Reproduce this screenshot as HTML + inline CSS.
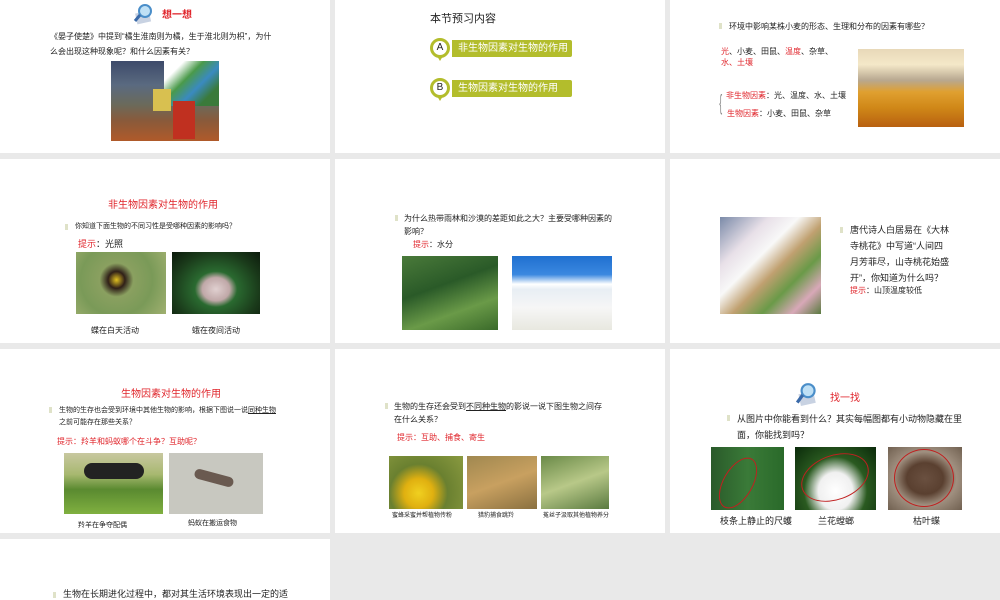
<!DOCTYPE html>
<html><head><meta charset="utf-8"><style>
*{margin:0;padding:0;box-sizing:border-box}
html{width:1000px;height:600px;overflow:hidden}
body{width:1000px;height:600px;overflow:hidden;background:#e9e9e9;position:relative;font-family:"Liberation Sans","Noto Sans CJK SC",sans-serif;color:#222}
.s{position:absolute;background:#fff;width:330px;height:184px;overflow:hidden}
.a{position:absolute;white-space:nowrap}
.r{color:#e0262c}
.t{font-size:8px;line-height:13px}
.m{font-size:9px;line-height:15px}
.b{position:absolute;width:3px;height:6px;background:#dfe2c8}
.img{position:absolute;overflow:hidden}
.pill{position:absolute;left:452px;width:120px;height:17px;background:#b3bd2c;color:#fff;font-size:10px;line-height:17px;padding-left:6px;border-radius:0 2px 2px 0}
.circ{position:absolute;width:20px;height:20px;border-radius:50%;background:#fff;border:3px solid #b3bd2c;font-size:10px;line-height:14px;text-align:center;color:#222}
.circ:after{content:"";position:absolute;left:4px;top:15px;border:3px solid transparent;border-top:5px solid #b3bd2c}
</style></head><body>

<!-- Slide 1 -->
<div class="s" style="left:0;top:-31px;height:184px"></div>
<svg class="img" style="left:133px;top:3px" width="22" height="22" viewBox="0 0 22 22"><rect x="3" y="9" width="14" height="11" fill="#c8d2e2" transform="rotate(-12 10 14)"/><circle cx="12" cy="8" r="6" fill="#bfe0f5" stroke="#4a8ec9" stroke-width="2"/><path d="M7 12 L2 18" stroke="#3a6aa9" stroke-width="3"/></svg>
<div class="a r" style="left:162px;top:6px;font-size:10px;font-weight:bold">想一想</div>
<div class="a t" style="left:50px;top:30px">《晏子使楚》中提到“橘生淮南则为橘，生于淮北则为枳”，为什</div>
<div class="a t" style="left:50px;top:45px">么会出现这种现象呢？和什么因素有关？</div>
<div class="img" style="left:111px;top:61px;width:108px;height:80px;background:linear-gradient(180deg,#3d4a6a 0%,#5a6a80 30%,#6b6a5a 55%,#8a5a3a 75%,#b05a2a 100%)"><div style="position:absolute;right:0;top:0;width:55px;height:45px;background:linear-gradient(135deg,#fff 20%,#4a9a4a 40%,#3a8ac0 60%,#3a7a3a 80%)"></div><div style="position:absolute;left:62px;top:40px;width:22px;height:38px;background:#c03020"></div><div style="position:absolute;left:42px;top:28px;width:18px;height:22px;background:#d8c050"></div></div>

<!-- Slide 2 -->
<div class="s" style="left:335px;top:-31px"></div>
<div class="a" style="left:430px;top:10px;font-size:11px">本节预习内容</div>
<div class="pill" style="top:40px">非生物因素对生物的作用</div>
<div class="circ" style="left:430px;top:38px">A</div>
<div class="pill" style="top:80px">生物因素对生物的作用</div>
<div class="circ" style="left:430px;top:78px">B</div>

<!-- Slide 3 -->
<div class="s" style="left:670px;top:-31px"></div>
<div class="b" style="left:719px;top:23px"></div>
<div class="a t" style="left:729px;top:20px">环境中影响某株小麦的形态、生理和分布的因素有哪些？</div>
<div class="a t" style="left:721px;top:45px"><span class="r">光</span>、小麦、田鼠、<span class="r">温度</span>、杂草、</div>
<div class="a t r" style="left:721px;top:56px">水、土壤</div>
<div class="a" style="left:717px;top:88px;font-size:22px;line-height:30px;color:#888;font-weight:100;transform:scaleX(.4)">{</div>
<div class="a t" style="left:726px;top:89px"><span class="r">非生物因素</span>：光、温度、水、土壤</div>
<div class="a t" style="left:727px;top:107px"><span class="r">生物因素</span>：小麦、田鼠、杂草</div>
<div class="img" style="left:858px;top:49px;width:106px;height:78px;background:linear-gradient(180deg,#e8d8b8 0%,#f4e8c8 20%,#b8a890 40%,#e0a030 55%,#d08818 75%,#b86010 100%)"></div>

<!-- Slide 4 -->
<div class="s" style="left:0;top:159px"></div>
<div class="a r" style="left:108px;top:196px;font-size:10px">非生物因素对生物的作用</div>
<div class="b" style="left:65px;top:224px"></div>
<div class="a t" style="left:75px;top:220px;font-size:7px">你知道下面生物的不同习性是受哪种因素的影响吗？</div>
<div class="a m" style="left:78px;top:237px"><span class="r">提示</span>：光照</div>
<div class="img" style="left:76px;top:252px;width:90px;height:62px;background:radial-gradient(circle at 45% 45%,#e0c020 0,#302018 14%,#8aa060 28%,#7a9a58 60%,#a0b070 100%)"></div>
<div class="img" style="left:172px;top:252px;width:88px;height:62px;background:radial-gradient(ellipse at 50% 60%,#e0d0d0 0,#c0a8a8 22%,#2a6a30 34%,#1a3a1a 70%,#0c1a0c 100%)"></div>
<div class="a t" style="left:91px;top:324px">蝶在白天活动</div>
<div class="a t" style="left:192px;top:324px">蛾在夜间活动</div>

<!-- Slide 5 -->
<div class="s" style="left:335px;top:159px"></div>
<div class="b" style="left:395px;top:215px"></div>
<div class="a t" style="left:404px;top:212px">为什么热带雨林和沙漠的差距如此之大？主要受哪种因素的</div>
<div class="a t" style="left:404px;top:225px">影响？</div>
<div class="a t" style="left:413px;top:238px"><span class="r">提示</span>：水分</div>
<div class="img" style="left:402px;top:256px;width:96px;height:74px;background:linear-gradient(160deg,#4a7a3a,#2a5a28 40%,#6a9a48 70%,#3a6a2a)"></div>
<div class="img" style="left:512px;top:256px;width:100px;height:74px;background:linear-gradient(180deg,#2070d0 0%,#3a88e0 25%,#fff 38%,#e8eef4 45%,#f6f6f6 70%,#e8e8e0 100%)"></div>

<!-- Slide 6 -->
<div class="s" style="left:670px;top:159px"></div>
<div class="img" style="left:720px;top:217px;width:101px;height:97px;background:linear-gradient(135deg,#7a8aa8 0%,#e8e0e8 25%,#f8f8f8 40%,#c0a070 55%,#6a9a48 70%,#d8a8b8 85%,#5a7a40 100%)"></div>
<div class="b" style="left:840px;top:227px"></div>
<div class="a m" style="left:850px;top:222px;line-height:16px">唐代诗人白居易在《大林<br>寺桃花》中写道“人间四<br>月芳菲尽，山寺桃花始盛<br>开”，你知道为什么吗？</div>
<div class="a t" style="left:850px;top:284px"><span class="r">提示</span>：山顶温度较低</div>

<!-- Slide 7 -->
<div class="s" style="left:0;top:349px"></div>
<div class="a r" style="left:121px;top:385px;font-size:10px">生物因素对生物的作用</div>
<div class="b" style="left:49px;top:407px"></div>
<div class="a t" style="left:59px;top:404px;font-size:7px">生物的生存也会受到环境中其他生物的影响，根据下图说一说<u>同种生物</u></div>
<div class="a t" style="left:59px;top:416px;font-size:7px">之前可能存在那些关系？</div>
<div class="a t r" style="left:57px;top:435px">提示：羚羊和蚂蚁哪个在斗争？互助呢？</div>
<div class="img" style="left:64px;top:453px;width:99px;height:61px;background:linear-gradient(180deg,#c8c8a0 0%,#a8b870 35%,#5a8a30 60%,#80b040 100%)"><div style="position:absolute;left:20px;top:10px;width:60px;height:16px;background:#222;border-radius:8px"></div></div>
<div class="img" style="left:169px;top:453px;width:94px;height:61px;background:#c8c8c0"><div style="position:absolute;left:25px;top:20px;width:40px;height:10px;background:#6a5a50;border-radius:5px;transform:rotate(15deg)"></div></div>
<div class="a t" style="left:78px;top:519px;font-size:7px">羚羊在争夺配偶</div>
<div class="a t" style="left:188px;top:517px;font-size:7px">蚂蚁在搬运食物</div>

<!-- Slide 8 -->
<div class="s" style="left:335px;top:349px"></div>
<div class="b" style="left:385px;top:403px"></div>
<div class="a t" style="left:394px;top:400px">生物的生存还会受到<u>不同种生物</u>的影说一说下图生物之间存</div>
<div class="a t" style="left:394px;top:413px">在什么关系？</div>
<div class="a t r" style="left:397px;top:431px">提示：互助、捕食、寄生</div>
<div class="img" style="left:389px;top:456px;width:74px;height:53px;background:radial-gradient(circle at 40% 70%,#f0d020 0,#e0b010 25%,#6a8030 50%,#8a9a40 100%)"></div>
<div class="img" style="left:467px;top:456px;width:70px;height:53px;background:linear-gradient(160deg,#a08850,#c8a060 50%,#8a7040)"></div>
<div class="img" style="left:541px;top:456px;width:68px;height:53px;background:linear-gradient(160deg,#6a8a48,#b8c888 50%,#5a7a40)"></div>
<div class="a t" style="left:392px;top:510px;font-size:6px">蜜蜂采蜜并帮植物传粉</div>
<div class="a t" style="left:478px;top:510px;font-size:6px">猎豹捕食跳羚</div>
<div class="a t" style="left:543px;top:510px;font-size:6px">菟丝子汲取其他植物养分</div>

<!-- Slide 9 -->
<div class="s" style="left:670px;top:349px"></div>
<svg class="img" style="left:795px;top:382px" width="24" height="26" viewBox="0 0 22 24"><rect x="4" y="10" width="14" height="11" fill="#c8d2e2" transform="rotate(-12 10 15)"/><circle cx="12" cy="8" r="6" fill="#bfe0f5" stroke="#4a8ec9" stroke-width="2"/><path d="M7 12 L2 19" stroke="#3a6aa9" stroke-width="3"/></svg>
<div class="a r" style="left:830px;top:389px;font-size:10px">找一找</div>
<div class="b" style="left:727px;top:415px"></div>
<div class="a m" style="left:737px;top:411px;line-height:16px">从图片中你能看到什么？其实每幅图都有小动物隐藏在里<br>面，你能找到吗？</div>
<div class="img" style="left:711px;top:447px;width:73px;height:63px;background:linear-gradient(90deg,#2a5a2a,#3a7a38 50%,#2a6a2a)"><div style="position:absolute;left:12px;top:8px;width:30px;height:56px;border:1px solid #c02020;border-radius:50%;transform:rotate(30deg)"></div></div>
<div class="img" style="left:795px;top:447px;width:81px;height:63px;background:radial-gradient(ellipse at 50% 70%,#fff 0,#f0f0f0 30%,#2a5a20 55%,#0a2a0a 100%)"><div style="position:absolute;left:5px;top:8px;width:70px;height:45px;border:1px solid #c02020;border-radius:50%;transform:rotate(-20deg)"></div></div>
<div class="img" style="left:888px;top:447px;width:74px;height:63px;background:radial-gradient(ellipse at 50% 50%,#6a5040 0,#5a4030 35%,#a09080 60%,#706050 100%)"><div style="position:absolute;left:6px;top:2px;width:60px;height:58px;border:1px solid #c02020;border-radius:50%"></div></div>
<div class="a m" style="left:720px;top:514px">枝条上静止的尺蠖</div>
<div class="a m" style="left:818px;top:514px">兰花螳螂</div>
<div class="a m" style="left:913px;top:514px">枯叶蝶</div>

<!-- Slide 10 -->
<div class="s" style="left:0;top:539px;height:61px"></div>
<div class="b" style="left:53px;top:592px"></div>
<div class="a m" style="left:63px;top:587px">生物在长期进化过程中，都对其生活环境表现出一定的适</div>
</body></html>
